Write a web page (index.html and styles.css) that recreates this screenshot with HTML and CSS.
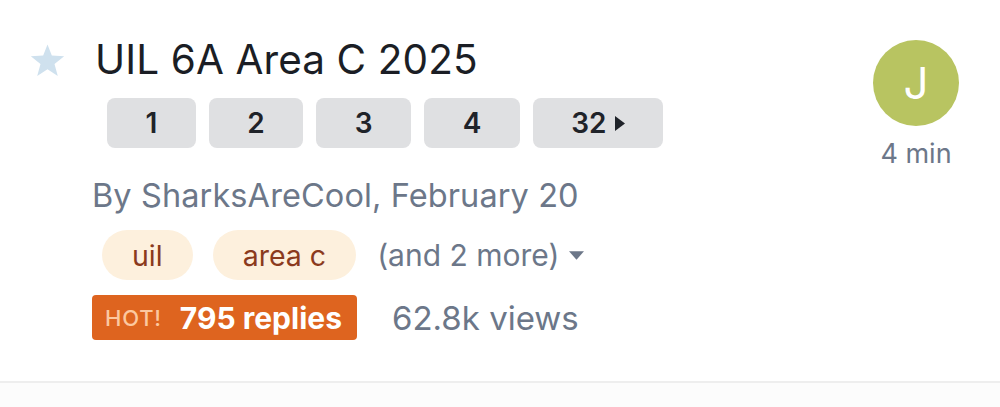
FILE: index.html
```html
<!DOCTYPE html>
<html>
<head>
<meta charset="utf-8">
<link rel="stylesheet" href="styles.css">
</head>
<body>
<div class="topic">
  <div class="star-col">
    <svg class="star" viewBox="0 0 34 32" width="35" height="33"><path d="M17 0.5 L21.2 11.2 L33.2 11.8 L23.8 19.3 L27 31 L17 24.4 L7 31 L10.2 19.3 L0.8 11.8 L12.8 11.2 Z" fill="#cfe1ee"/></svg>
  </div>
  <div class="main">
    <div class="title">UIL 6A Area C 2025</div>
    <div class="pages">
      <span class="page">1</span>
      <span class="page">2</span>
      <span class="page">3</span>
      <span class="page">4</span>
      <span class="page">32<svg class="tri" viewBox="0 0 8 12" width="10" height="15"><path d="M0 0 L8 6 L0 12 Z" fill="#1f2329"/></svg></span>
    </div>
    <div class="meta">By SharksAreCool, February 20</div>
    <div class="tags">
      <span class="tag">uil</span>
      <span class="tag">area c</span>
      <span class="more">(and 2 more)<svg class="caret" viewBox="0 0 14 8" width="15" height="9"><path d="M0 0 L14 0 L7 8 Z" fill="#6c7789"/></svg></span>
    </div>
    <div class="stats">
      <span class="hot"><span class="hot-label">HOT!</span><span class="replies">795 replies</span></span>
      <span class="views">62.8k views</span>
    </div>
  </div>
  <div class="side">
    <div class="avatar">J</div>
    <div class="age">4 min</div>
  </div>
</div>
<div class="below"></div>
</body>
</html>
```
FILE: styles.css
```css
html, body {
  margin: 0;
  padding: 0;
  background: #fcfcfc;
}
body {
  font-family: Inter, "Noto Sans", sans-serif;
  width: 1000px;
  height: 407px;
  overflow: hidden;
}
.topic {
  display: flex;
  background: #fff;
  height: 383px;
  box-sizing: border-box;
  border-bottom: 2px solid #eeeeee;
  padding: 36px 41px 0 30px;
}
.star-col {
  width: 62px;
  flex: none;
  padding-top: 8px;
}
.star {
  display: block;
}
.main {
  flex: 1;
  display: flex;
  flex-direction: column;
  align-items: flex-start;
}
.title {
  font-size: 40.5px;
  line-height: 48px;
  color: #1b1e25;
  margin-left: 3px;
  letter-spacing: 0.1px;
}
.pages {
  display: flex;
  gap: 13px;
  margin-top: 14px;
  margin-left: 15px;
}
.page {
  display: flex;
  align-items: center;
  justify-content: center;
  height: 50px;
  padding: 0 38.5px;
  background: #dfe0e2;
  border-radius: 8px;
  font-size: 28px;
  font-weight: 600;
  color: #1f2329;
}
.page .tri {
  margin-left: 8px;
}
.meta {
  margin-top: 28px;
  font-size: 32.5px;
  line-height: 40px;
  color: #6c7789;
  letter-spacing: 0.1px;
}
.tags {
  display: flex;
  align-items: center;
  gap: 20px;
  margin-top: 14px;
  margin-left: 10px;
}
.tag {
  display: flex;
  align-items: center;
  height: 50px;
  padding: 0 30px;
  background: #fdf0dd;
  border-radius: 25px;
  font-size: 28.5px;
  color: #8b3a1d;
}
.more {
  display: flex;
  align-items: center;
  font-size: 30px;
  color: #6c7789;
  margin-left: 1px;
}
.caret {
  margin-left: 10px;
}
.stats {
  display: flex;
  align-items: center;
  margin-top: 15px;
}
.hot {
  display: flex;
  align-items: center;
  height: 45px;
  padding: 0 15px 0 13px;
  background: #de641f;
  border-radius: 4px;
}
.hot-label {
  font-size: 22px;
  font-weight: 500;
  color: #fcc8a0;
  margin-right: 18px;
  letter-spacing: 0.8px;
}
.replies {
  font-size: 30px;
  font-weight: 700;
  color: #fff;
}
.views {
  margin-left: 35px;
  font-size: 33px;
  color: #6c7789;
}
.side {
  flex: none;
  width: 86px;
  display: flex;
  flex-direction: column;
  align-items: center;
  padding-top: 4px;
}
.avatar {
  width: 86px;
  height: 86px;
  border-radius: 50%;
  background: #b8c461;
  color: #fff;
  font-size: 44px;
  display: flex;
  align-items: center;
  justify-content: center;
}
.age {
  margin-top: 11px;
  font-size: 27px;
  color: #6c7789;
  white-space: nowrap;
}
```
